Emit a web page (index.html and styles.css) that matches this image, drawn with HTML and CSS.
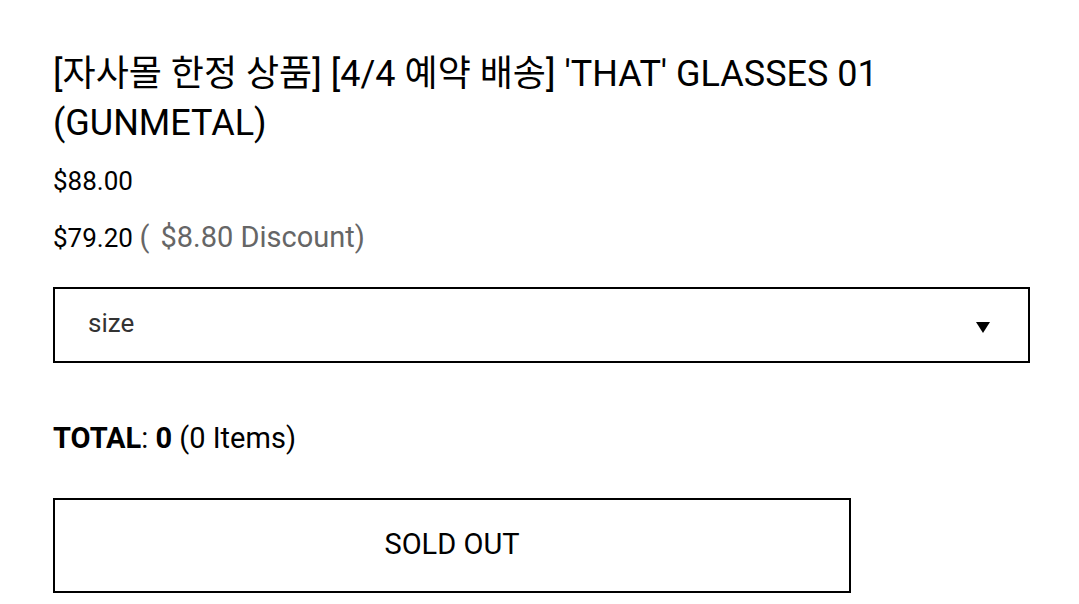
FILE: index.html
```html
<!DOCTYPE html>
<html lang="ko">
<head>
    <meta charset="UTF-8">
    <meta name="viewport" content="width=device-width, initial-scale=1.0">
    <title>'THAT' GLASSES 01 (GUNMETAL)</title>
    <link rel="stylesheet" href="styles.css">
</head>
<body>
    <div class="product">
        <h1 class="product-name">[자사몰 한정 상품] [4/4 예약 배송] 'THAT' GLASSES 01 (GUNMETAL)</h1>
        <p class="price">$88.00</p>
        <p class="price sale">$79.20 <span class="discount">( <span class="discount-amount">$8.80</span> Discount)</span></p>

        <!-- Option select -->
        <div class="option">
            <span class="option-label">size</span>
            <span class="option-arrow"></span>
        </div>

        <p class="total"><strong>TOTAL</strong>: <strong>0</strong> (0 Items)</p>

        <button class="sold-out">SOLD OUT</button>
    </div>
</body>
</html>
```

FILE: styles.css
```css
body {
    margin: 0;
    background-color: #fff;
    color: #000;
    font-family: Roboto, "Noto Sans CJK KR", sans-serif;
}

.product {
    padding: 50px 50px 0 53px;
    width: 977px;
}

.product-name {
    margin: 0 0 5px;
    font-size: 36px;
    font-weight: 400;
    line-height: 49px;
}

.price {
    margin: 0;
    font-size: 26px;
    line-height: 56px;
}

.discount {
    color: #666;
    font-size: 29px;
}

.discount-amount {
    margin-left: 4px;
}

.option {
    display: flex;
    justify-content: space-between;
    align-items: center;
    height: 72px;
    margin-top: 21px;
    border: 2px solid #000;
    padding: 0 38px 0 33px;
}

.option-label {
    font-size: 26px;
    color: #333;
    margin-top: -4px;
}

.option-arrow {
    width: 0;
    height: 0;
    border-left: 7px solid transparent;
    border-right: 7px solid transparent;
    border-top: 11px solid #000;
    margin-top: 4px;
}

.total {
    margin: 60px 0 0;
    font-size: 29px;
    line-height: 30px;
}

.sold-out {
    display: block;
    width: 798px;
    height: 95px;
    margin-top: 45px;
    padding-bottom: 4px;
    border: 2px solid #000;
    background-color: #fff;
    font-family: Roboto, sans-serif;
    font-size: 29px;
    color: #000;
    cursor: pointer;
}
```
